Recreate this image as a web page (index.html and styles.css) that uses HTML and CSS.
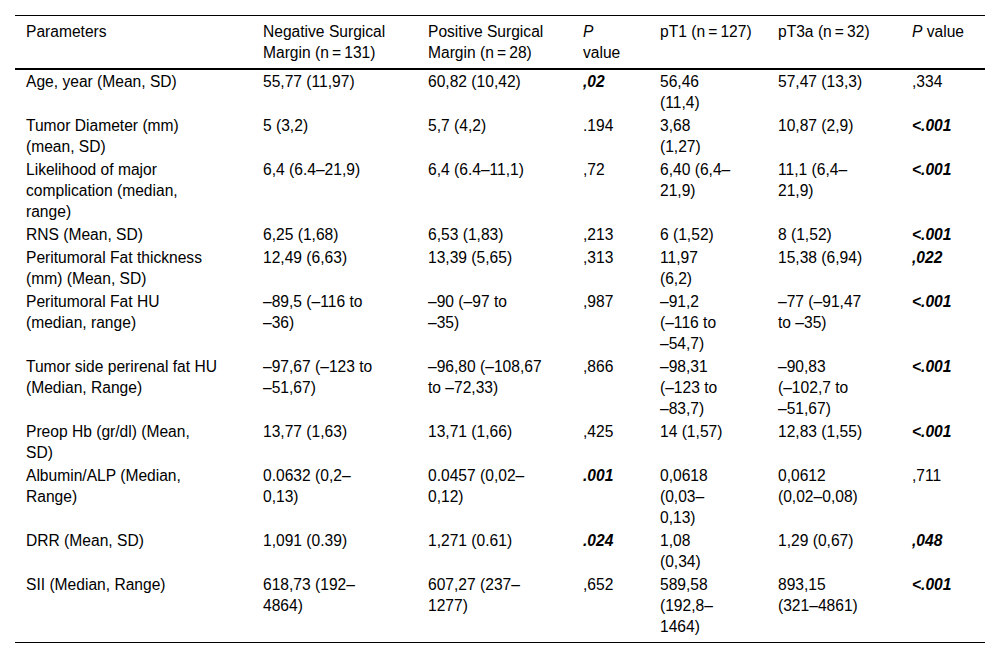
FILE: index.html
```html
<!DOCTYPE html>
<html lang="en">
<head>
<meta charset="utf-8">
<title>Parameters table</title>
<link rel="stylesheet" href="styles.css">
</head>
<body>
<table class="data">
  <colgroup>
    <col class="c1"><col class="c2"><col class="c3"><col class="c4"><col class="c5"><col class="c6"><col class="c7">
  </colgroup>
  <thead>
    <tr>
      <th>Parameters</th>
      <th>Negative Surgical<br>Margin (n&#8201;=&#8201;131)</th>
      <th>Positive Surgical<br>Margin (n&#8201;=&#8201;28)</th>
      <th><i>P</i><br>value</th>
      <th>pT1 (n&#8201;=&#8201;127)</th>
      <th>pT3a (n&#8201;=&#8201;32)</th>
      <th><i>P</i> value</th>
    </tr>
  </thead>
  <tbody>
    <tr>
      <td>Age, year (Mean, SD)</td>
      <td>55,77 (11,97)</td>
      <td>60,82 (10,42)</td>
      <td><b class="sig">,02</b></td>
      <td>56,46<br>(11,4)</td>
      <td>57,47 (13,3)</td>
      <td>,334</td>
    </tr>
    <tr>
      <td>Tumor Diameter (mm)<br>(mean, SD)</td>
      <td>5 (3,2)</td>
      <td>5,7 (4,2)</td>
      <td>.194</td>
      <td>3,68<br>(1,27)</td>
      <td>10,87 (2,9)</td>
      <td><b class="sig">&lt;.001</b></td>
    </tr>
    <tr>
      <td>Likelihood of major<br>complication (median,<br>range)</td>
      <td>6,4 (6.4–21,9)</td>
      <td>6,4 (6.4–11,1)</td>
      <td>,72</td>
      <td>6,40 (6,4–<br>21,9)</td>
      <td>11,1 (6,4–<br>21,9)</td>
      <td><b class="sig">&lt;.001</b></td>
    </tr>
    <tr>
      <td>RNS (Mean, SD)</td>
      <td>6,25 (1,68)</td>
      <td>6,53 (1,83)</td>
      <td>,213</td>
      <td>6 (1,52)</td>
      <td>8 (1,52)</td>
      <td><b class="sig">&lt;.001</b></td>
    </tr>
    <tr>
      <td>Peritumoral Fat thickness<br>(mm) (Mean, SD)</td>
      <td>12,49 (6,63)</td>
      <td>13,39 (5,65)</td>
      <td>,313</td>
      <td>11,97<br>(6,2)</td>
      <td>15,38 (6,94)</td>
      <td><b class="sig">,022</b></td>
    </tr>
    <tr>
      <td>Peritumoral Fat HU<br>(median, range)</td>
      <td>–89,5 (–116 to<br>–36)</td>
      <td>–90 (–97 to<br>–35)</td>
      <td>,987</td>
      <td>–91,2<br>(–116 to<br>–54,7)</td>
      <td>–77 (–91,47<br>to –35)</td>
      <td><b class="sig">&lt;.001</b></td>
    </tr>
    <tr>
      <td>Tumor side perirenal fat HU<br>(Median, Range)</td>
      <td>–97,67 (–123 to<br>–51,67)</td>
      <td>–96,80 (–108,67<br>to –72,33)</td>
      <td>,866</td>
      <td>–98,31<br>(–123 to<br>–83,7)</td>
      <td>–90,83<br>(–102,7 to<br>–51,67)</td>
      <td><b class="sig">&lt;.001</b></td>
    </tr>
    <tr>
      <td>Preop Hb (gr/dl) (Mean,<br>SD)</td>
      <td>13,77 (1,63)</td>
      <td>13,71 (1,66)</td>
      <td>,425</td>
      <td>14 (1,57)</td>
      <td>12,83 (1,55)</td>
      <td><b class="sig">&lt;.001</b></td>
    </tr>
    <tr>
      <td>Albumin/ALP (Median,<br>Range)</td>
      <td>0.0632 (0,2–<br>0,13)</td>
      <td>0.0457 (0,02–<br>0,12)</td>
      <td><b class="sig">.001</b></td>
      <td>0,0618<br>(0,03–<br>0,13)</td>
      <td>0,0612<br>(0,02–0,08)</td>
      <td>,711</td>
    </tr>
    <tr>
      <td>DRR (Mean, SD)</td>
      <td>1,091 (0.39)</td>
      <td>1,271 (0.61)</td>
      <td><b class="sig">.024</b></td>
      <td>1,08<br>(0,34)</td>
      <td>1,29 (0,67)</td>
      <td><b class="sig">,048</b></td>
    </tr>
    <tr class="last">
      <td>SII (Median, Range)</td>
      <td>618,73 (192–<br>4864)</td>
      <td>607,27 (237–<br>1277)</td>
      <td>,652</td>
      <td>589,58<br>(192,8–<br>1464)</td>
      <td>893,15<br>(321–4861)</td>
      <td><b class="sig">&lt;.001</b></td>
    </tr>
  </tbody>
</table>
</body>
</html>
```
FILE: styles.css
```css
html, body {
  margin: 0;
  padding: 0;
  background: #fff;
}

body {
  padding: 15px 15px 0 15px;
  font-family: "Liberation Sans", Arial, sans-serif;
  font-size: 15.6px;
  line-height: 21px;
  color: #000;
}

.data {
  width: 970px;
  table-layout: fixed;
  border-collapse: collapse;
  border-top: 1px solid #000;
  border-bottom: 1px solid #000;
}

.c1 { width: 237px; }
.c2 { width: 165px; }
.c3 { width: 155px; }
.c4 { width: 77px; }
.c5 { width: 118px; }
.c6 { width: 134px; }
.c7 { width: 84px; }

.data th,
.data td {
  text-align: left;
  vertical-align: top;
  white-space: nowrap;
  font-weight: normal;
}

.data th {
  padding: 5px 11px 5px 11px;
  border-bottom: 2px solid #000;
}

.data td {
  padding: 1px 11px;
}

.data .last td {
  padding-bottom: 5px;
}

.sig {
  font-weight: bold;
  font-style: italic;
}
```
